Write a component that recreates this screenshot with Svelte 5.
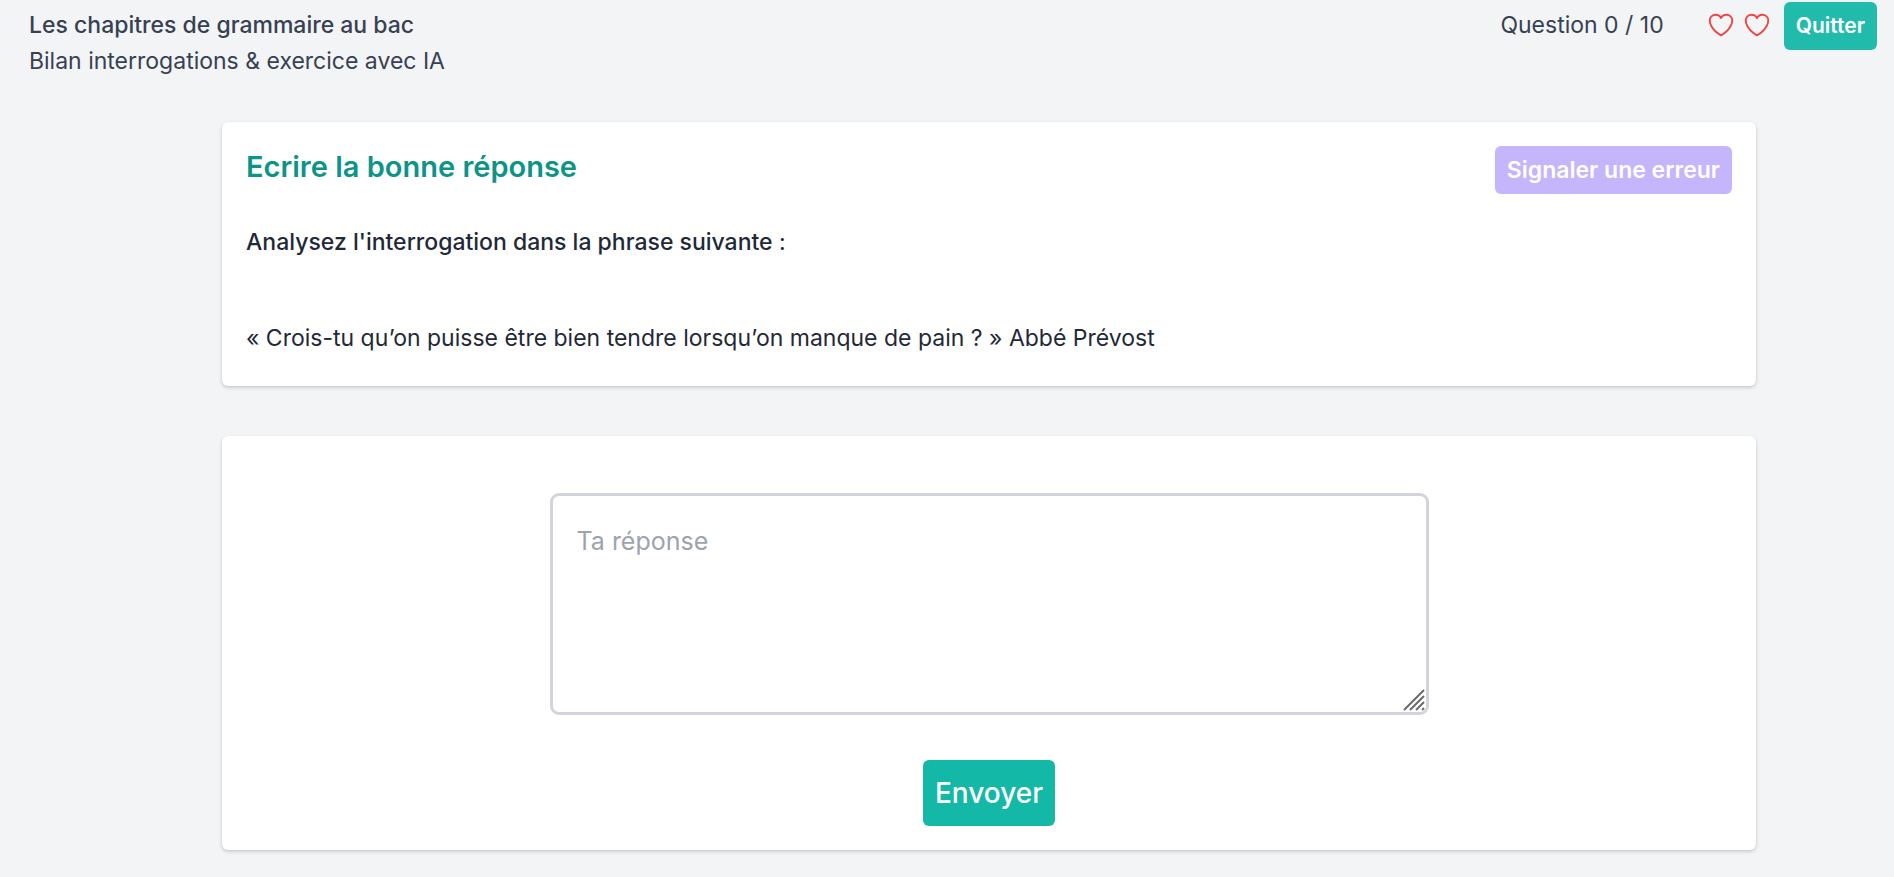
<script lang="ts">
  let question = $state(0)
  let answer = $state('')

  const total = 10
  const lives = [1, 2]
</script>

<div class="page">
  <header class="top-bar">
    <div class="lesson">
      <div class="chapter">Les chapitres de grammaire au bac</div>
      <div>Bilan interrogations &amp; exercice avec IA</div>
    </div>

    <div class="status">
      <div class="progress">
        <span>Question {question} / {total}</span>
        <div class="lives">
          {#each lives as life (life)}
            <svg class="heart" viewBox="0 0 24 24" aria-hidden="true">
              <path
                d="M21 8.25c0-2.485-2.099-4.5-4.688-4.5-1.935 0-3.597 1.126-4.312 2.733-.715-1.607-2.377-2.733-4.313-2.733C5.1 3.75 3 5.765 3 8.25c0 7.22 9 12 9 12s9-4.78 9-12z"
              />
            </svg>
          {/each}
        </div>
      </div>
      <button class="btn quit" type="button">Quitter</button>
    </div>
  </header>

  <main>
    <section class="card">
      <div class="card-head">
        <h1>Ecrire la bonne réponse</h1>
        <button class="btn report" type="button">Signaler une erreur</button>
      </div>
      <p class="prompt"><label for="answer">Analysez l'interrogation dans la phrase suivante</label> :</p>
      <p class="quote">« Crois-tu qu’on puisse être bien tendre lorsqu’on manque de pain ? » Abbé Prévost</p>
    </section>

    <form class="card answer-card" onsubmit={(e) => e.preventDefault()}>
      <div class="field">
        <textarea id="answer" placeholder="Ta réponse" bind:value={answer}></textarea>
        <svg class="grip" viewBox="0 0 22 22" aria-hidden="true">
          <path d="M1 21L21 1M7 21L21 7M13 21L21 13M19 21L21 19" />
        </svg>
      </div>
      <button class="btn send" type="submit">Envoyer</button>
    </form>
  </main>
</div>

<style>
  :global(body) {
    margin: 0;
    background: #f3f4f6;
  }

  .page {
    font-family: Inter, 'Liberation Sans', sans-serif;
    font-size: 23px;
    line-height: 36px;
    color: #1f2937;
  }

  .top-bar {
    display: flex;
    justify-content: space-between;
    align-items: flex-start;
    padding: 2px 17px 0 29px;
    color: #374151;
  }

  .lesson {
    padding-top: 5px;
  }

  .chapter {
    font-weight: 500;
  }

  .status {
    display: flex;
    align-items: flex-start;
    gap: 12px;
  }

  .progress {
    display: flex;
    align-items: center;
    gap: 42px;
    padding-top: 5px;
  }

  .lives {
    display: flex;
    gap: 6px;
  }

  .heart {
    width: 30px;
    height: 30px;
    fill: none;
    stroke: #ef4444;
    stroke-width: 1.5;
    stroke-linecap: round;
    stroke-linejoin: round;
  }

  .btn {
    border: 0;
    border-radius: 6px;
    padding: 6px 12px;
    font-family: inherit;
    font-size: 23px;
    font-weight: 500;
    line-height: 36px;
    color: #fff;
    cursor: pointer;
  }

  .quit {
    background: #20bbab;
    font-size: 21px;
    font-weight: 600;
  }

  main {
    display: flex;
    flex-direction: column;
    gap: 50px;
    padding: 43px 138px 24px 222px;
  }

  .card {
    background: #fff;
    border-radius: 6px;
    padding: 24px;
    box-shadow: 0 2px 4px rgba(0, 0, 0, 0.1), 0 1px 3px rgba(0, 0, 0, 0.1);
  }

  .card-head {
    display: flex;
    justify-content: space-between;
    align-items: flex-start;
    margin-bottom: 30px;
  }

  h1 {
    margin: 0;
    font-size: 29px;
    font-weight: 600;
    line-height: 42px;
    color: #0d9488;
  }

  .report {
    background: #c4b5fd;
    font-weight: 600;
  }

  .prompt {
    margin: 0 0 60px;
  }

  .prompt label {
    font-weight: 500;
  }

  .quote {
    margin: 0 0 6px;
  }

  .answer-card {
    display: flex;
    flex-direction: column;
    align-items: center;
    gap: 45px;
    padding-top: 57px;
  }

  .field {
    position: relative;
    width: 100%;
    max-width: 879px;
  }

  textarea {
    display: block;
    box-sizing: border-box;
    width: 100%;
    height: 222px;
    padding: 24px;
    border: 3px solid #d1d5db;
    border-radius: 9px;
    background: #fff;
    font-family: inherit;
    font-size: 25px;
    line-height: 42px;
    color: #1f2937;
    resize: none;
  }

  textarea::placeholder {
    color: #9ca3af;
  }

  .grip {
    position: absolute;
    right: 4px;
    bottom: 4px;
    width: 22px;
    height: 22px;
    fill: none;
    stroke: #6b6b6b;
    stroke-width: 2;
    pointer-events: none;
  }

  .send {
    padding: 12px;
    background: #14b8a6;
    font-size: 28px;
    line-height: 42px;
  }
</style>
